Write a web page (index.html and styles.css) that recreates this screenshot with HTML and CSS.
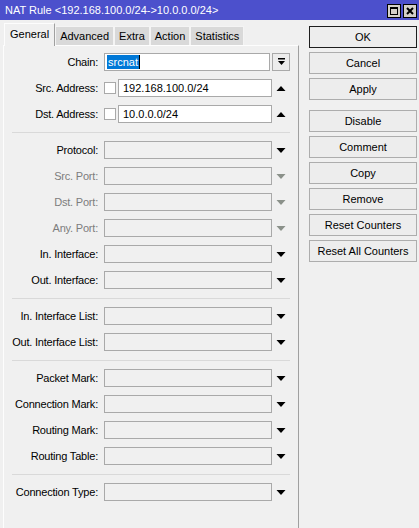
FILE: index.html
```html
<!DOCTYPE html>
<html>
<head>
<meta charset="utf-8">
<link rel="stylesheet" href="styles.css">
</head>
<body>
<div class="titlebar">
  <span class="title">NAT Rule &lt;192.168.100.0/24-&gt;10.0.0.0/24&gt;</span>
  <div class="wbtns">
    <span class="wbtn"><span class="maxicon"></span></span>
    <span class="wbtn"><svg width="8" height="8" viewBox="0 0 8 8"><path d="M1 1 L7 7 M7 1 L1 7" stroke="#000" stroke-width="2"/></svg></span>
  </div>
</div>
<div class="main">
  <div class="left">
    <div class="tabs">
      <span class="tab active">General</span>
      <span class="tab">Advanced</span>
      <span class="tab">Extra</span>
      <span class="tab">Action</span>
      <span class="tab">Statistics</span>
    </div>
    <div class="panel">
      <div class="section">
        <div class="row">
          <span class="label">Chain:</span>
          <div class="field">
            <div class="input white chain"><span class="sel">srcnat</span><span class="caret"></span></div>
            <span class="ddbtn"><svg width="9" height="8" viewBox="0 0 9 8"><rect x="1" y="0" width="7" height="1.5" fill="#000"/><polygon points="1,3 8,3 4.5,7" fill="#000"/></svg></span>
          </div>
        </div>
        <div class="row">
          <span class="label">Src. Address:</span>
          <div class="field">
            <span class="check"></span>
            <div class="input white">192.168.100.0/24</div>
            <span class="arrow"><svg width="10" height="5" viewBox="0 0 10 5"><polygon points="0.5,5 9.5,5 5,0" fill="#000"/></svg></span>
          </div>
        </div>
        <div class="row">
          <span class="label">Dst. Address:</span>
          <div class="field">
            <span class="check"></span>
            <div class="input white">10.0.0.0/24</div>
            <span class="arrow"><svg width="10" height="5" viewBox="0 0 10 5"><polygon points="0.5,5 9.5,5 5,0" fill="#000"/></svg></span>
          </div>
        </div>
      </div>
      <div class="sep"></div>
      <div class="section">
        <div class="row"><span class="label">Protocol:</span><div class="field"><div class="input"></div><span class="arrow"><svg width="10" height="5" viewBox="0 0 10 5"><polygon points="0.5,0 9.5,0 5,5" fill="#000"/></svg></span></div></div>
        <div class="row"><span class="label dis">Src. Port:</span><div class="field"><div class="input"></div><span class="arrow"><svg width="10" height="5" viewBox="0 0 10 5"><polygon points="0.5,0 9.5,0 5,5" fill="#8b918a"/></svg></span></div></div>
        <div class="row"><span class="label dis">Dst. Port:</span><div class="field"><div class="input"></div><span class="arrow"><svg width="10" height="5" viewBox="0 0 10 5"><polygon points="0.5,0 9.5,0 5,5" fill="#8b918a"/></svg></span></div></div>
        <div class="row"><span class="label dis">Any. Port:</span><div class="field"><div class="input"></div><span class="arrow"><svg width="10" height="5" viewBox="0 0 10 5"><polygon points="0.5,0 9.5,0 5,5" fill="#8b918a"/></svg></span></div></div>
        <div class="row"><span class="label">In. Interface:</span><div class="field"><div class="input"></div><span class="arrow"><svg width="10" height="5" viewBox="0 0 10 5"><polygon points="0.5,0 9.5,0 5,5" fill="#000"/></svg></span></div></div>
        <div class="row"><span class="label">Out. Interface:</span><div class="field"><div class="input"></div><span class="arrow"><svg width="10" height="5" viewBox="0 0 10 5"><polygon points="0.5,0 9.5,0 5,5" fill="#000"/></svg></span></div></div>
      </div>
      <div class="sep"></div>
      <div class="section">
        <div class="row"><span class="label">In. Interface List:</span><div class="field"><div class="input"></div><span class="arrow"><svg width="10" height="5" viewBox="0 0 10 5"><polygon points="0.5,0 9.5,0 5,5" fill="#000"/></svg></span></div></div>
        <div class="row"><span class="label">Out. Interface List:</span><div class="field"><div class="input"></div><span class="arrow"><svg width="10" height="5" viewBox="0 0 10 5"><polygon points="0.5,0 9.5,0 5,5" fill="#000"/></svg></span></div></div>
      </div>
      <div class="sep"></div>
      <div class="section">
        <div class="row"><span class="label">Packet Mark:</span><div class="field"><div class="input"></div><span class="arrow"><svg width="10" height="5" viewBox="0 0 10 5"><polygon points="0.5,0 9.5,0 5,5" fill="#000"/></svg></span></div></div>
        <div class="row"><span class="label">Connection Mark:</span><div class="field"><div class="input"></div><span class="arrow"><svg width="10" height="5" viewBox="0 0 10 5"><polygon points="0.5,0 9.5,0 5,5" fill="#000"/></svg></span></div></div>
        <div class="row"><span class="label">Routing Mark:</span><div class="field"><div class="input"></div><span class="arrow"><svg width="10" height="5" viewBox="0 0 10 5"><polygon points="0.5,0 9.5,0 5,5" fill="#000"/></svg></span></div></div>
        <div class="row"><span class="label">Routing Table:</span><div class="field"><div class="input"></div><span class="arrow"><svg width="10" height="5" viewBox="0 0 10 5"><polygon points="0.5,0 9.5,0 5,5" fill="#000"/></svg></span></div></div>
      </div>
      <div class="sep"></div>
      <div class="section">
        <div class="row"><span class="label">Connection Type:</span><div class="field"><div class="input"></div><span class="arrow"><svg width="10" height="5" viewBox="0 0 10 5"><polygon points="0.5,0 9.5,0 5,5" fill="#000"/></svg></span></div></div>
      </div>
    </div>
  </div>
  <div class="buttons">
    <span class="btn default">OK</span>
    <span class="btn">Cancel</span>
    <span class="btn">Apply</span>
    <span class="btn group">Disable</span>
    <span class="btn">Comment</span>
    <span class="btn">Copy</span>
    <span class="btn">Remove</span>
    <span class="btn">Reset Counters</span>
    <span class="btn">Reset All Counters</span>
  </div>
</div>
</body>
</html>
```
FILE: styles.css
```css
html, body {
  margin: 0;
  padding: 0;
}
body {
  width: 419px;
  height: 528px;
  overflow: hidden;
  background: #f0f0f0;
  font-family: "Liberation Sans", Arial, sans-serif;
  font-size: 11px;
  color: #000;
}
.titlebar {
  height: 20px;
  background: #4c50cc;
  color: #fff;
  display: flex;
  align-items: center;
  justify-content: space-between;
  padding: 0 2px 0 5px;
}
.title {
  font-size: 11px;
  white-space: nowrap;
}
.wbtns {
  display: flex;
  gap: 2px;
  padding-top: 1px;
}
.wbtn {
  width: 14px;
  height: 14px;
  box-sizing: border-box;
  border: 1px solid #000;
  background: #d4d0c8;
  display: flex;
  align-items: center;
  justify-content: center;
}
.maxicon {
  width: 8px;
  height: 8px;
  box-sizing: border-box;
  border: 1px solid #000;
  border-top-width: 2px;
}
.main {
  display: flex;
  height: 508px;
}
.left {
  width: 299px;
  padding: 3px 0 0 3px;
  box-sizing: border-box;
  display: flex;
  flex-direction: column;
}
.tabs {
  display: flex;
  align-items: flex-end;
  height: 22px;
  padding-left: 1px;
}
.tab {
  height: 19px;
  box-sizing: border-box;
  padding: 0 4px;
  background: #d9d9d9;
  border: 1px solid #f4f4f4;
  border-bottom: none;
  display: flex;
  align-items: center;
  white-space: nowrap;
}
.tab.active {
  height: 23px;
  margin-bottom: -1px;
  background: #f0f0f0;
  border-color: #fdfdfd #a0a0a0 #f0f0f0 #fdfdfd;
  padding: 0 5px 2px 5px;
  position: relative;
  z-index: 1;
}
.panel {
  flex: 1;
  border-top: 1px solid #fdfdfd;
  border-left: 1px solid #fdfdfd;
  border-right: 1px solid #a0a0a0;
  padding-top: 7px;
}
.section {
  display: flex;
  flex-direction: column;
  gap: 8px;
}
.row {
  display: flex;
  align-items: center;
  height: 18px;
}
.label {
  width: 94px;
  margin-right: 6px;
  text-align: right;
  white-space: nowrap;
  letter-spacing: -0.2px;
}
.label.dis {
  color: #7d7d7d;
}
.field {
  display: flex;
  align-items: center;
  width: 186px;
  height: 18px;
}
.input {
  flex: 1;
  height: 18px;
  box-sizing: border-box;
  border: 1px solid #a9a9a9;
  background: #f0f0f0;
  padding-left: 4px;
  display: flex;
  align-items: center;
  white-space: nowrap;
}
.input.white {
  background: #fff;
}
.input.chain {
  padding-left: 2px;
}
.sel {
  background: #0078d7;
  color: #fff;
  line-height: 14px;
  padding: 0 1px;
}
.caret {
  width: 1px;
  height: 14px;
  background: #000;
}
.ddbtn {
  width: 18px;
  height: 18px;
  margin-left: 2px;
  box-sizing: border-box;
  border: 1px solid #a9a9a9;
  background: #ececec;
  display: flex;
  align-items: center;
  justify-content: center;
}
.check {
  width: 12px;
  height: 12px;
  box-sizing: border-box;
  border: 1px solid #a9a9a9;
  background: #fff;
  margin-right: 2px;
}
.arrow {
  width: 18px;
  display: flex;
  justify-content: center;
  align-items: center;
}
.sep {
  height: 1px;
  background: #d9d9d9;
  margin: 9px 8px 8px 8px;
}
.buttons {
  margin-left: 10px;
  width: 108px;
  padding-top: 6px;
  display: flex;
  flex-direction: column;
  gap: 4px;
}
.btn {
  height: 22px;
  box-sizing: border-box;
  border: 1px solid #adadad;
  background: #ededed;
  display: flex;
  align-items: center;
  justify-content: center;
  white-space: nowrap;
}
.btn.default {
  border-color: #1e1e1e;
}
.btn.group {
  margin-top: 6px;
}
```
